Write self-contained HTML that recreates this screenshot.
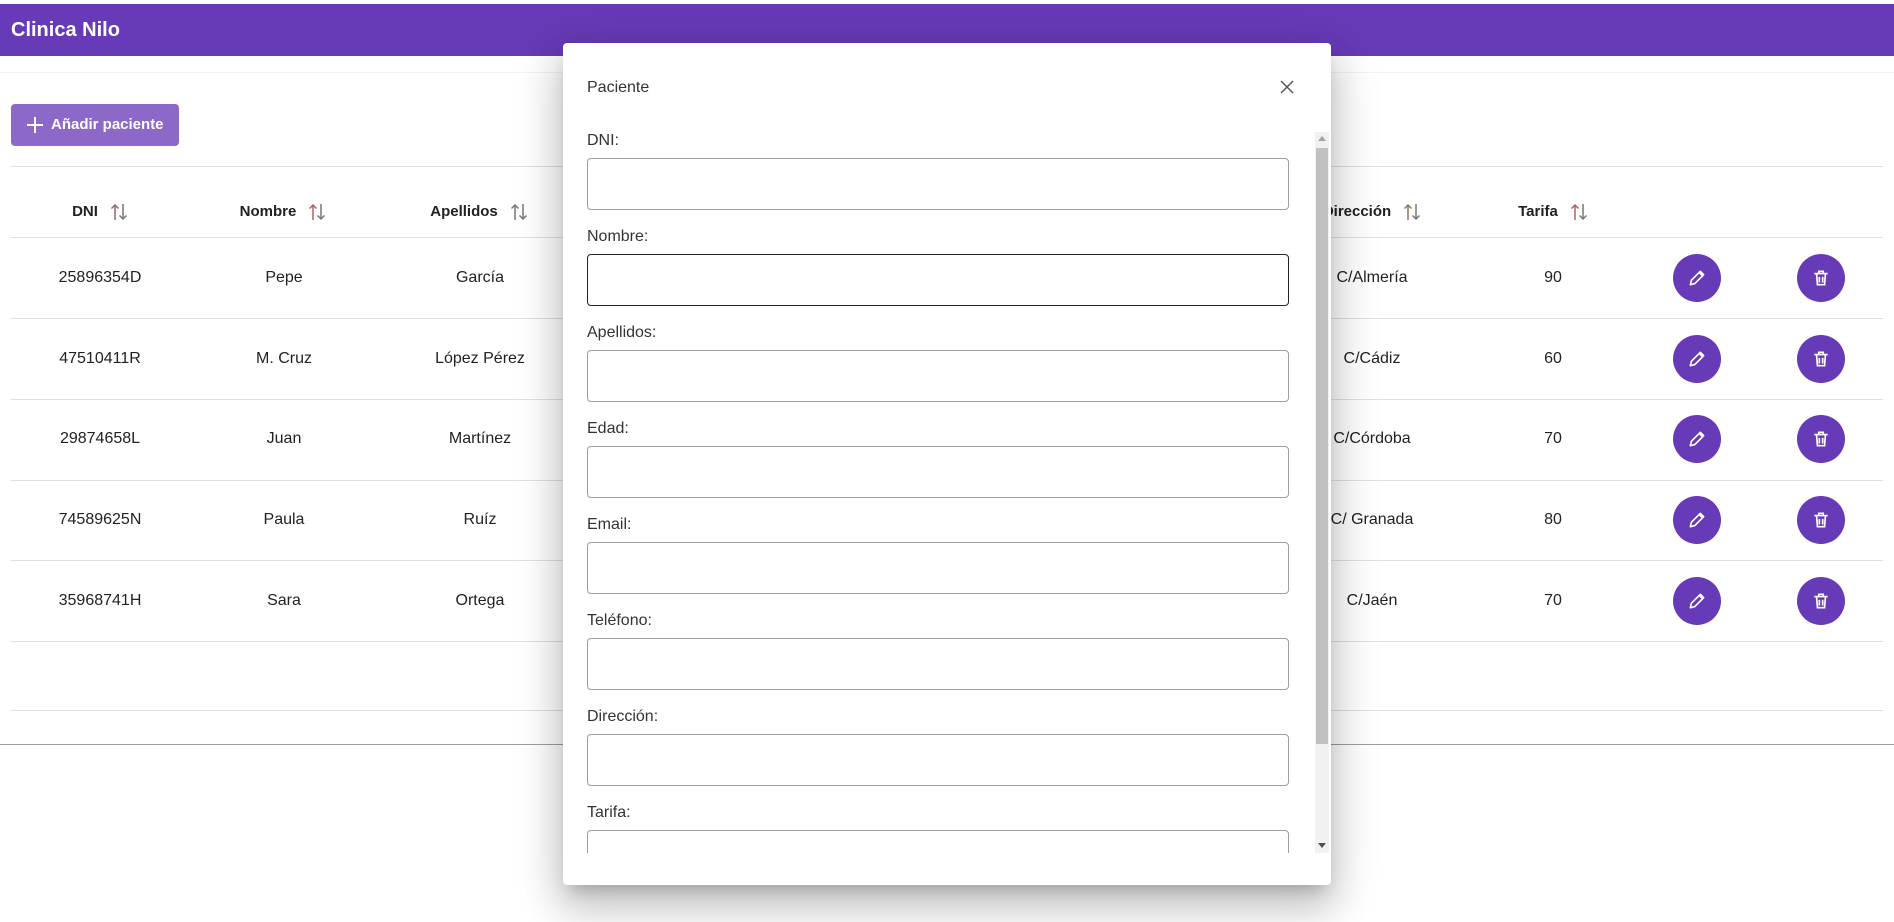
<!DOCTYPE html>
<html><head><meta charset="utf-8"><style>
*{box-sizing:border-box;margin:0;padding:0}
body{width:1894px;height:922px;position:relative;background:#fff;font-family:"Liberation Sans",sans-serif;color:#222;overflow:hidden}
.hdr{position:absolute;left:0;top:4px;width:1894px;height:52px;background:#673ab7;color:#fff;font-weight:bold;font-size:20px;line-height:52px;padding-left:11px}
.ln{position:absolute;height:1px;background:#e0e0e0}
.btn{position:absolute;left:11px;top:104px;width:168px;height:42px;background:#8c69c9;border-radius:4px;color:#fff;font-weight:bold;font-size:15px;line-height:42px;padding-left:40px}
.c{position:absolute;width:240px;text-align:center;font-size:16px;line-height:20px}
.h{font-weight:bold;font-size:15px}
.srt{display:inline-block;vertical-align:middle;margin-left:12px}
.cir{position:absolute;width:48px;height:48px;border-radius:50%;background:#673ab7;display:flex;align-items:center;justify-content:center}
.modal{position:absolute;left:563px;top:43px;width:768px;height:842px;background:#fff;border-radius:4px;box-shadow:0 11px 15px -7px rgba(0,0,0,.2),0 24px 38px 3px rgba(0,0,0,.14),0 9px 46px 8px rgba(0,0,0,.12);overflow:hidden}
.lab{position:absolute;left:24px;font-size:16px;color:#333;line-height:20px}
.inp{position:absolute;left:24px;width:702px;height:52px;border:1px solid #9e9e9e;border-radius:4px}
</style></head><body>
<div class="hdr">Clinica Nilo</div>
<div class="ln" style="left:0;top:72px;width:1894px;background:#f3f3f3"></div>
<div class="btn"><svg style="position:absolute;left:15px;top:12px" width="18" height="18" viewBox="0 0 18 18"><path d="M9 1v16M1 9h16" stroke="#fff" stroke-width="2"/></svg>Añadir paciente</div>
<div class="ln" style="left:11px;top:166px;width:1872px"></div>
<div class="ln" style="left:11px;top:237px;width:1872px"></div>
<div class="ln" style="left:11px;top:318px;width:1872px"></div>
<div class="ln" style="left:11px;top:399px;width:1872px"></div>
<div class="ln" style="left:11px;top:480px;width:1872px"></div>
<div class="ln" style="left:11px;top:560px;width:1872px"></div>
<div class="ln" style="left:11px;top:641px;width:1872px"></div>
<div class="ln" style="left:11px;top:710px;width:1872px"></div>
<div class="ln" style="left:0;top:744px;width:1894px;background:#9e9e9e"></div>

<div class="c h" style="left:-20px;top:202px">DNI<svg class="srt" width="18" height="20" viewBox="0 0 18 20"><path d="M5 18V3M1.5 6.5L5 3l3.5 3.5" stroke="#8a6a6a" stroke-width="1.5" fill="none"/><path d="M13 2v15M9.5 13.5L13 17l3.5-3.5" stroke="#777" stroke-width="1.5" fill="none"/></svg></div>
<div class="c h" style="left:163px;top:202px">Nombre<svg class="srt" width="18" height="20" viewBox="0 0 18 20"><path d="M5 18V3M1.5 6.5L5 3l3.5 3.5" stroke="#b06060" stroke-width="1.5" fill="none"/><path d="M13 2v15M9.5 13.5L13 17l3.5-3.5" stroke="#777" stroke-width="1.5" fill="none"/></svg></div>
<div class="c h" style="left:359px;top:202px">Apellidos<svg class="srt" width="18" height="20" viewBox="0 0 18 20"><path d="M5 18V3M1.5 6.5L5 3l3.5 3.5" stroke="#777" stroke-width="1.5" fill="none"/><path d="M13 2v15M9.5 13.5L13 17l3.5-3.5" stroke="#777" stroke-width="1.5" fill="none"/></svg></div>
<div class="c h" style="left:1252px;top:202px">Dirección<svg class="srt" width="18" height="20" viewBox="0 0 18 20"><path d="M5 18V3M1.5 6.5L5 3l3.5 3.5" stroke="#8a7a5a" stroke-width="1.5" fill="none"/><path d="M13 2v15M9.5 13.5L13 17l3.5-3.5" stroke="#777" stroke-width="1.5" fill="none"/></svg></div>
<div class="c h" style="left:1433px;top:202px">Tarifa<svg class="srt" width="18" height="20" viewBox="0 0 18 20"><path d="M5 18V3M1.5 6.5L5 3l3.5 3.5" stroke="#b06060" stroke-width="1.5" fill="none"/><path d="M13 2v15M9.5 13.5L13 17l3.5-3.5" stroke="#777" stroke-width="1.5" fill="none"/></svg></div>

<div class="c" style="left:-20px;top:268px">25896354D</div><div class="c" style="left:164px;top:268px">Pepe</div><div class="c" style="left:360px;top:268px">García</div><div class="c" style="left:1252px;top:268px">C/Almería</div><div class="c" style="left:1433px;top:268px">90</div>
<div class="c" style="left:-20px;top:349px">47510411R</div><div class="c" style="left:164px;top:349px">M. Cruz</div><div class="c" style="left:360px;top:349px">López Pérez</div><div class="c" style="left:1252px;top:349px">C/Cádiz</div><div class="c" style="left:1433px;top:349px">60</div>
<div class="c" style="left:-20px;top:429px">29874658L</div><div class="c" style="left:164px;top:429px">Juan</div><div class="c" style="left:360px;top:429px">Martínez</div><div class="c" style="left:1252px;top:429px">C/Córdoba</div><div class="c" style="left:1433px;top:429px">70</div>
<div class="c" style="left:-20px;top:510px">74589625N</div><div class="c" style="left:164px;top:510px">Paula</div><div class="c" style="left:360px;top:510px">Ruíz</div><div class="c" style="left:1252px;top:510px">C/ Granada</div><div class="c" style="left:1433px;top:510px">80</div>
<div class="c" style="left:-20px;top:591px">35968741H</div><div class="c" style="left:164px;top:591px">Sara</div><div class="c" style="left:360px;top:591px">Ortega</div><div class="c" style="left:1252px;top:591px">C/Jaén</div><div class="c" style="left:1433px;top:591px">70</div>

<div class="cir" style="left:1673px;top:254px"><svg width="20" height="20" viewBox="0 0 18 18"><path d="M3 15l1-4 8-8 3 3-8 8z M11 4l3 3" stroke="#fff" stroke-width="1.5" fill="none" stroke-linejoin="round"/></svg></div>
<div class="cir" style="left:1797px;top:254px"><svg width="20" height="20" viewBox="0 0 18 18"><path d="M3 5h12M7 5V3h4v2M5 5l.8 10h6.4L13 5M7.5 8v5M10.5 8v5" stroke="#fff" stroke-width="1.5" fill="none"/></svg></div>
<div class="cir" style="left:1673px;top:335px"><svg width="20" height="20" viewBox="0 0 18 18"><path d="M3 15l1-4 8-8 3 3-8 8z M11 4l3 3" stroke="#fff" stroke-width="1.5" fill="none" stroke-linejoin="round"/></svg></div>
<div class="cir" style="left:1797px;top:335px"><svg width="20" height="20" viewBox="0 0 18 18"><path d="M3 5h12M7 5V3h4v2M5 5l.8 10h6.4L13 5M7.5 8v5M10.5 8v5" stroke="#fff" stroke-width="1.5" fill="none"/></svg></div>
<div class="cir" style="left:1673px;top:415px"><svg width="20" height="20" viewBox="0 0 18 18"><path d="M3 15l1-4 8-8 3 3-8 8z M11 4l3 3" stroke="#fff" stroke-width="1.5" fill="none" stroke-linejoin="round"/></svg></div>
<div class="cir" style="left:1797px;top:415px"><svg width="20" height="20" viewBox="0 0 18 18"><path d="M3 5h12M7 5V3h4v2M5 5l.8 10h6.4L13 5M7.5 8v5M10.5 8v5" stroke="#fff" stroke-width="1.5" fill="none"/></svg></div>
<div class="cir" style="left:1673px;top:496px"><svg width="20" height="20" viewBox="0 0 18 18"><path d="M3 15l1-4 8-8 3 3-8 8z M11 4l3 3" stroke="#fff" stroke-width="1.5" fill="none" stroke-linejoin="round"/></svg></div>
<div class="cir" style="left:1797px;top:496px"><svg width="20" height="20" viewBox="0 0 18 18"><path d="M3 5h12M7 5V3h4v2M5 5l.8 10h6.4L13 5M7.5 8v5M10.5 8v5" stroke="#fff" stroke-width="1.5" fill="none"/></svg></div>
<div class="cir" style="left:1673px;top:577px"><svg width="20" height="20" viewBox="0 0 18 18"><path d="M3 15l1-4 8-8 3 3-8 8z M11 4l3 3" stroke="#fff" stroke-width="1.5" fill="none" stroke-linejoin="round"/></svg></div>
<div class="cir" style="left:1797px;top:577px"><svg width="20" height="20" viewBox="0 0 18 18"><path d="M3 5h12M7 5V3h4v2M5 5l.8 10h6.4L13 5M7.5 8v5M10.5 8v5" stroke="#fff" stroke-width="1.5" fill="none"/></svg></div>

<div class="modal">
  <div style="position:absolute;left:24px;top:35px;font-size:16px;line-height:20px;color:#333">Paciente</div>
  <svg style="position:absolute;left:716px;top:36px" width="16" height="16" viewBox="0 0 16 16"><path d="M2 2l12 12M14 2L2 14" stroke="#555" stroke-width="1.5"/></svg>
  <div style="position:absolute;left:0;top:89px;width:768px;height:721px;overflow:hidden">
    <div class="lab" style="top:-1px">DNI:</div><div class="inp" style="top:26px"></div>
    <div class="lab" style="top:95px">Nombre:</div><div class="inp" style="top:122px;border-color:#222"></div>
    <div class="lab" style="top:191px">Apellidos:</div><div class="inp" style="top:218px"></div>
    <div class="lab" style="top:287px">Edad:</div><div class="inp" style="top:314px"></div>
    <div class="lab" style="top:383px">Email:</div><div class="inp" style="top:410px"></div>
    <div class="lab" style="top:479px">Teléfono:</div><div class="inp" style="top:506px"></div>
    <div class="lab" style="top:575px">Dirección:</div><div class="inp" style="top:602px"></div>
    <div class="lab" style="top:671px">Tarifa:</div><div class="inp" style="top:698px"></div>
  </div>
  <div style="position:absolute;left:752px;top:89px;width:14px;height:721px;background:#f1f1f1">
    <div style="position:absolute;left:3px;top:4px;width:0;height:0;border-left:4px solid transparent;border-right:4px solid transparent;border-bottom:5px solid #a3a3a3"></div>
    <div style="position:absolute;left:1px;top:16px;width:12px;height:596px;background:#c1c1c1"></div>
    <div style="position:absolute;left:3px;bottom:5px;width:0;height:0;border-left:4px solid transparent;border-right:4px solid transparent;border-top:5px solid #505050"></div>
  </div>
</div>
</body></html>
